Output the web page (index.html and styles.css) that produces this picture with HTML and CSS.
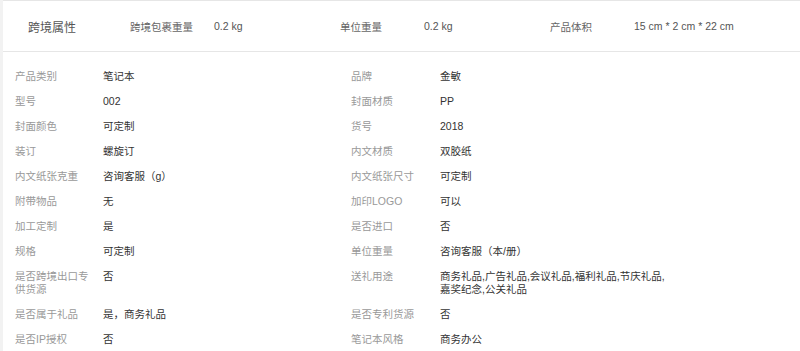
FILE: index.html
```html
<!DOCTYPE html>
<html lang="zh-CN">
<head>
<meta charset="utf-8">
<link rel="stylesheet" href="styles.css">
</head>
<body>
<div class="page">
  <div class="cross">
    <div class="cross-title">跨境属性</div>
    <div class="cross-item"><span class="cross-label">跨境包裹重量</span><span class="cross-value">0.2 kg</span></div>
    <div class="cross-item"><span class="cross-label">单位重量</span><span class="cross-value">0.2 kg</span></div>
    <div class="cross-item"><span class="cross-label">产品体积</span><span class="cross-value">15 cm * 2 cm * 22 cm</span></div>
  </div>
  <div class="attrs">
    <div class="k">产品类别</div><div class="v">笔记本</div><div class="k">品牌</div><div class="v">金敏</div>
    <div class="k">型号</div><div class="v">002</div><div class="k">封面材质</div><div class="v">PP</div>
    <div class="k">封面颜色</div><div class="v">可定制</div><div class="k">货号</div><div class="v">2018</div>
    <div class="k">装订</div><div class="v">螺旋订</div><div class="k">内文材质</div><div class="v">双胶纸</div>
    <div class="k">内文纸张克重</div><div class="v">咨询客服（g）</div><div class="k">内文纸张尺寸</div><div class="v">可定制</div>
    <div class="k">附带物品</div><div class="v">无</div><div class="k">加印LOGO</div><div class="v">可以</div>
    <div class="k">加工定制</div><div class="v">是</div><div class="k">是否进口</div><div class="v">否</div>
    <div class="k">规格</div><div class="v">可定制</div><div class="k">单位重量</div><div class="v">咨询客服（本/册）</div>
    <div class="k">是否跨境出口专供货源</div><div class="v">否</div><div class="k">送礼用途</div><div class="v">商务礼品,广告礼品,会议礼品,福利礼品,节庆礼品,嘉奖纪念,公关礼品</div>
    <div class="k">是否属于礼品</div><div class="v">是，商务礼品</div><div class="k">是否专利货源</div><div class="v">否</div>
    <div class="k">是否IP授权</div><div class="v">否</div><div class="k">笔记本风格</div><div class="v">商务办公</div>
  </div>
</div>
</body>
</html>
```
FILE: styles.css
```css
html, body {
  margin: 0;
  padding: 0;
  background: #f2f2f2;
}
body {
  font-family: "Liberation Sans", "Noto Sans CJK SC", sans-serif;
  font-size: 10.5px;
  color: #333;
}
.page {
  margin-left: 3px;
  background: #fff;
  min-height: 351px;
}
.cross {
  display: flex;
  align-items: center;
  height: 50px;
  border-top: 1px solid #e6e6e6;
  border-bottom: 1px solid #e6e6e6;
  box-sizing: content-box;
}
.cross-title {
  width: 102px;
  padding-left: 25px;
  font-size: 12px;
  color: #555;
}
.cross-item {
  display: flex;
  align-items: center;
  width: 210px;
}
.cross-label {
  width: 84px;
  color: #666;
}
.cross-value {
  color: #555;
}
.attrs {
  display: grid;
  grid-template-columns: 88px 248px 89px 232px;
  padding: 12px 0 0 12px;
  line-height: 13px;
}
.attrs .k,
.attrs .v {
  padding: 6px 0;
}
.attrs .k {
  color: #999;
  padding-right: 10px;
}
.attrs .v {
  color: #333;
}
```
